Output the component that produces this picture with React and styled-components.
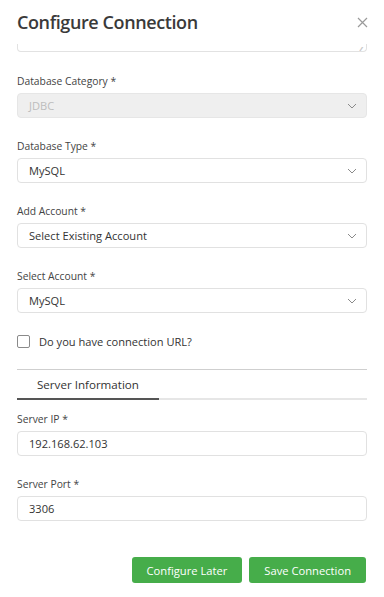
import React from "react";
import styled, { createGlobalStyle } from "styled-components";

const GlobalStyle = createGlobalStyle`
  html, body {
    margin: 0;
    padding: 0;
    background: #ffffff;
  }
  * {
    box-sizing: border-box;
  }
`;

const Chevron = () => (
  <svg width="10" height="6" viewBox="0 0 10 6" fill="none">
    <path d="M1 1l4 4 4-4" stroke="#8a8a8a" strokeWidth="1" />
  </svg>
);

const App = () => {
  return (
    <>
      <GlobalStyle />
      <Modal>
        <Header>
          <Title>Configure Connection</Title>
          <Close aria-label="close">
            <svg width="11" height="11" viewBox="0 0 11 11">
              <path d="M1 1l9 9M10 1l-9 9" stroke="#9a9a9a" strokeWidth="1.2" />
            </svg>
          </Close>
        </Header>

        <Body>
          <TextareaTail>
            <Grip>⁄⁄</Grip>
          </TextareaTail>

          <Field>
            <Label>Database Category *</Label>
            <Select disabled>
              <span>JDBC</span>
              <Chevron />
            </Select>
          </Field>

          <Field>
            <Label>Database Type *</Label>
            <Select>
              <span>MySQL</span>
              <Chevron />
            </Select>
          </Field>

          <Field>
            <Label>Add Account *</Label>
            <Select>
              <span>Select Existing Account</span>
              <Chevron />
            </Select>
          </Field>

          <Field>
            <Label>Select Account *</Label>
            <Select>
              <span>MySQL</span>
              <Chevron />
            </Select>
          </Field>

          <CheckRow>
            <Box />
            <span>Do you have connection URL?</span>
          </CheckRow>

          <Divider />

          <Tabs>
            <Tab $active>Server Information</Tab>
          </Tabs>

          <Field>
            <Label>Server IP *</Label>
            <Input>192.168.62.103</Input>
          </Field>

          <Field>
            <Label>Server Port *</Label>
            <Input>3306</Input>
          </Field>
        </Body>

        <Footer>
          <Button>Configure Later</Button>
          <Button>Save Connection</Button>
        </Footer>
      </Modal>
    </>
  );
};

const Modal = styled.div`
  width: 384px;
  height: 597px;
  background: #fff;
  font-family: "Open Sans", "Noto Sans", sans-serif;
  color: #333;
  display: flex;
  flex-direction: column;
  overflow: hidden;
`;

const Header = styled.div`
  height: 44px;
  padding: 0 16px 0 17px;
  display: flex;
  align-items: center;
  justify-content: space-between;
`;

const Title = styled.h1`
  margin: 0;
  font-size: 18px;
  font-weight: 600;
  letter-spacing: -0.4px;
  color: #3a3a3a;
`;

const Close = styled.button`
  border: none;
  background: none;
  padding: 0;
  display: flex;
  cursor: pointer;
`;

const Body = styled.div`
  padding: 0 17px;
  flex: 1;
`;

const TextareaTail = styled.div`
  height: 8px;
  border: 1px solid #e2e2e2;
  border-top: none;
  border-radius: 0 0 4px 4px;
  position: relative;
  margin-bottom: 21px;
`;

const Grip = styled.span`
  position: absolute;
  right: 4px;
  bottom: -2px;
  font-size: 6px;
  color: #999;
`;

const Field = styled.div`
  margin-bottom: 20px;
`;

const Label = styled.div`
  font-size: 10.3px;
  line-height: 16px;
  color: #444;
  margin-bottom: 4px;
`;

const Select = styled.div`
  height: 25px;
  border: 1px solid ${(p) => (p.disabled ? "#e6e6e6" : "#e1e1e1")};
  border-radius: 4px;
  background: ${(p) => (p.disabled ? "#efefef" : "#fff")};
  color: ${(p) => (p.disabled ? "#bdbdbd" : "#333")};
  font-size: 11.1px;
  padding: 0 9px 0 11px;
  display: flex;
  align-items: center;
  justify-content: space-between;
`;

const Input = styled.div`
  height: 25px;
  border: 1px solid #e1e1e1;
  border-radius: 4px;
  background: #fff;
  color: #333;
  font-size: 11.1px;
  padding: 0 11px;
  display: flex;
  align-items: center;
`;

const CheckRow = styled.label`
  display: flex;
  align-items: center;
  gap: 9px;
  font-size: 11.1px;
  color: #333;
  margin-top: 4px;
  height: 16px;
`;

const Box = styled.span`
  width: 13px;
  height: 13px;
  border: 1px solid #8a8a8a;
  border-radius: 2px;
`;

const Divider = styled.hr`
  border: none;
  border-top: 1px solid #cfcfcf;
  margin: 20px 0 0;
`;

const Tabs = styled.div`
  display: flex;
  border-bottom: 2px solid #e6e6e6;
  margin-bottom: 11px;
`;

const Tab = styled.div`
  padding: 7px 20px 5px;
  font-size: 11.6px;
  line-height: 16px;
  color: #333;
  margin-bottom: -2px;
  border-bottom: 2px solid ${(p) => (p.$active ? "#555" : "transparent")};
`;

const Footer = styled.div`
  display: flex;
  justify-content: flex-end;
  gap: 7px;
  padding: 0 18px 14px;
`;

const Button = styled.button`
  height: 26px;
  padding: 0 15px;
  border: none;
  border-radius: 3px;
  background: #46ad4a;
  color: #fff;
  font-family: "Open Sans", "Noto Sans", sans-serif;
  font-size: 11.2px;
  cursor: pointer;
`;

export default App;
